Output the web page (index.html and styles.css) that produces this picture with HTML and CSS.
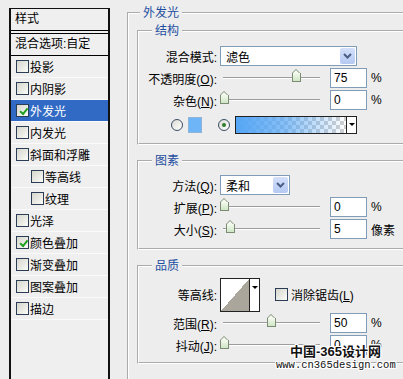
FILE: index.html
```html
<!DOCTYPE html>
<html lang="zh-CN">
<head>
  <meta charset="UTF-8" />
  <meta name="viewport" content="width=device-width, initial-scale=1.0"/>
  <title>图层样式 - 外发光</title>
  <link rel="stylesheet" href="styles.css">
</head>
<body>
  <div class="dialog">
    <div class="style-list">
      <div class="list-head">样式</div>
      <div class="list-blend">混合选项:自定</div>
      <ul class="list-items">
        <li><span class="cb"></span>投影</li>
        <li><span class="cb"></span>内阴影</li>
        <li class="active"><span class="cb on"></span>外发光</li>
        <li><span class="cb"></span>内发光</li>
        <li><span class="cb"></span>斜面和浮雕</li>
        <li class="sub"><span class="cb"></span>等高线</li>
        <li class="sub"><span class="cb"></span>纹理</li>
        <li><span class="cb"></span>光泽</li>
        <li><span class="cb on"></span>颜色叠加</li>
        <li><span class="cb"></span>渐变叠加</li>
        <li><span class="cb"></span>图案叠加</li>
        <li><span class="cb"></span>描边</li>
      </ul>
    </div>

    <fieldset class="group outer">
      <legend>外发光</legend>

      <fieldset class="group inner">
        <legend>结构</legend>
        <div class="row">
          <span class="lbl">混合模式:</span>
          <div class="combo combo-wide"><span>滤色</span><i class="combo-btn"><svg width="9" height="6" viewBox="0 0 9 6"><polyline points="1,1 4.5,4.5 8,1" fill="none" stroke="#4b5f86" stroke-width="2"/></svg></i></div>
        </div>
        <div class="row">
          <span class="lbl">不透明度(<u>O</u>):</span>
          <div class="slider"><i class="thumb" style="left:72px"></i></div>
          <input class="num" type="text" value="75">
          <span class="unit">%</span>
        </div>
        <div class="row">
          <span class="lbl">杂色(<u>N</u>):</span>
          <div class="slider"><i class="thumb" style="left:0px"></i></div>
          <input class="num" type="text" value="0">
          <span class="unit">%</span>
        </div>
        <div class="row color-row">
          <span class="radio"></span>
          <span class="swatch"></span>
          <span class="radio checked"></span>
          <div class="gradient-pick"><span class="gradient"></span><i class="arrow"></i></div>
        </div>
      </fieldset>

      <fieldset class="group inner">
        <legend>图素</legend>
        <div class="row">
          <span class="lbl">方法(<u>Q</u>):</span>
          <div class="combo combo-short"><span>柔和</span><i class="combo-btn"><svg width="9" height="6" viewBox="0 0 9 6"><polyline points="1,1 4.5,4.5 8,1" fill="none" stroke="#4b5f86" stroke-width="2"/></svg></i></div>
        </div>
        <div class="row">
          <span class="lbl">扩展(<u>P</u>):</span>
          <div class="slider"><i class="thumb" style="left:0px"></i></div>
          <input class="num" type="text" value="0">
          <span class="unit">%</span>
        </div>
        <div class="row">
          <span class="lbl">大小(<u>S</u>):</span>
          <div class="slider"><i class="thumb" style="left:6px"></i></div>
          <input class="num" type="text" value="5">
          <span class="unit">像素</span>
        </div>
      </fieldset>

      <fieldset class="group inner">
        <legend>品质</legend>
        <div class="row contour-row">
          <span class="lbl">等高线:</span>
          <div class="contour"><span class="curve"></span><i class="arrow"></i></div>
          <span class="cb antialias"></span>
          <span>消除锯齿(<u>L</u>)</span>
        </div>
        <div class="row">
          <span class="lbl">范围(<u>R</u>):</span>
          <div class="slider"><i class="thumb" style="left:47px"></i></div>
          <input class="num" type="text" value="50">
          <span class="unit">%</span>
        </div>
        <div class="row">
          <span class="lbl">抖动(<u>J</u>):</span>
          <div class="slider"><i class="thumb" style="left:0px"></i></div>
          <input class="num" type="text" value="0">
          <span class="unit">%</span>
        </div>
      </fieldset>
    </fieldset>

    <div class="watermark">
      <div class="wm-title">中国-365设计网</div>
      <div class="wm-url">www.cn365design.com</div>
    </div>
  </div>
</body>
</html>
```

FILE: styles.css
```css
body {
  margin: 0;
  background: #ededed;
  font-family: "Liberation Sans", "Noto Sans CJK SC", sans-serif;
  font-size: 12px;
  color: #000;
  overflow: hidden;
}
.dialog {
  display: flex;
  align-items: flex-start;
  height: 379px;
  position: relative;
  overflow: hidden;
}

/* left style list */
.style-list {
  margin: 8px 0 0 9px;
  width: 97px;
  height: 380px;
  flex-shrink: 0;
  border: 2px solid #111;
  border-top-width: 1px;
  border-bottom: none;
  background: #efefef;
}
.list-head {
  height: 21px;
  line-height: 21px;
  padding-left: 4px;
  border-bottom: 1px solid #000;
}
.list-blend {
  height: 21px;
  line-height: 21px;
  margin-top: 2px;
  padding-left: 4px;
  border-top: 1px solid #000;
  border-bottom: 1px solid #000;
}
.list-items {
  list-style: none;
  margin: 0;
  padding: 0;
}
.list-items li {
  height: 21px;
  display: flex;
  align-items: center;
  padding-left: 5px;
  border-bottom: 1px solid #fafafa;
}
.list-items li.sub {
  padding-left: 20px;
}
.list-items li.active {
  background: #316ac5;
  color: #fff;
}
.list-items .cb {
  margin-right: 1px;
}

/* checkbox */
.cb {
  width: 11px;
  height: 11px;
  border: 1px solid #2b3d55;
  background: linear-gradient(135deg, #d6d6ce, #fbfbf8);
  position: relative;
  flex-shrink: 0;
}
.cb.on::after {
  content: "";
  position: absolute;
  left: 2px;
  top: 1px;
  width: 6px;
  height: 3px;
  border-left: 2px solid #21a121;
  border-bottom: 2px solid #21a121;
  transform: rotate(-50deg) translate(-1px, 2px);
}

/* groups */
.group {
  margin: 0;
  padding: 0;
  border: 2px groove #fff;
  min-width: 0;
}
.group legend {
  color: #1f4fa0;
  line-height: 16px;
  padding: 0 3px;
}
.outer {
  width: 300px;
  flex-shrink: 0;
  margin: 5px 0 0 17px;
  padding: 0 0 0 8px;
  height: 420px;
}
.outer > legend {
  margin-left: 3px;
}
.inner {
  width: 290px;
  margin-top: 8px;
}
.inner legend {
  margin-left: 13px;
}
.outer > .inner:first-of-type {
  margin-top: 2px;
  padding: 6px 0 7px;
}
.inner:nth-of-type(2) {
  padding: 5px 0 8px;
}
.inner:nth-of-type(3) {
  padding: 3px 0 6px;
}

/* rows */
.row {
  display: flex;
  align-items: center;
  height: 22px;
}
.lbl {
  width: 78px;
  margin-right: 3px;
  text-align: right;
  white-space: nowrap;
}

.combo {
  height: 20px;
  box-sizing: border-box;
  border: 1px solid #7f9db9;
  background: #fff;
  display: flex;
  align-items: center;
  justify-content: space-between;
  padding-left: 5px;
}
.combo-wide {
  width: 137px;
}
.combo-short {
  width: 70px;
}
.combo-btn {
  width: 15px;
  height: 16px;
  margin-right: 1px;
  border-radius: 2px;
  background: linear-gradient(#d4e0fb, #b5c9f2);
  display: flex;
  align-items: center;
  justify-content: center;
}

.slider {
  position: relative;
  width: 100px;
  height: 22px;
}
.slider::before {
  content: "";
  position: absolute;
  left: 3px;
  right: 0;
  top: 10px;
  height: 1px;
  background: #9c9c9c;
  border-bottom: 1px solid #fff;
}
.thumb {
  position: absolute;
  top: 6px;
  width: 7px;
  height: 8px;
  margin-left: 0;
  border: 1px solid #7c8c74;
  border-top: none;
  background: linear-gradient(#f4faef, #cfe6c4);
}
.thumb::before {
  content: "";
  position: absolute;
  left: -1px;
  top: -4px;
  width: 0;
  height: 0;
  border-left: 4.5px solid transparent;
  border-right: 4.5px solid transparent;
  border-bottom: 4px solid #7c8c74;
}
.thumb::after {
  content: "";
  position: absolute;
  left: 0;
  top: -3px;
  width: 0;
  height: 0;
  border-left: 3.5px solid transparent;
  border-right: 3.5px solid transparent;
  border-bottom: 3px solid #f4faef;
}

.num {
  margin: 0 0 0 10px;
  width: 37px;
  height: 20px;
  box-sizing: border-box;
  border: 1px solid #7f9db9;
  padding: 0 3px;
  font: inherit;
  font-size: 12px;
  background: #fff;
}
.unit {
  margin-left: 4px;
}

/* color row */
.color-row {
  margin-top: 3px;
}
.radio {
  width: 10px;
  height: 10px;
  border: 1px solid #3a4d66;
  border-radius: 50%;
  background: linear-gradient(135deg, #dcdcd4, #fff);
  position: relative;
  flex-shrink: 0;
}
.color-row .radio:first-child {
  margin-left: 32px;
}
.radio.checked {
  margin-left: 16px;
}
.radio.checked::after {
  content: "";
  position: absolute;
  left: 3px;
  top: 3px;
  width: 4px;
  height: 4px;
  border-radius: 50%;
  background: #2f7a2f;
}
.swatch {
  width: 14px;
  height: 16px;
  margin-left: 5px;
  background: #6db5f6;
  border: 1px solid #8fb4d8;
  box-sizing: border-box;
}
.gradient-pick {
  margin-left: 5px;
  width: 122px;
  height: 18px;
  box-sizing: border-box;
  border: 1px solid #222;
  display: flex;
}
.gradient {
  flex: 1;
  background:
    linear-gradient(to right, #55a6f5 0%, rgba(85, 166, 245, 0.7) 45%, rgba(85, 166, 245, 0) 100%),
    repeating-conic-gradient(#cfcfcf 0 25%, #fff 0 50%) 0 0 / 8px 8px;
}
.arrow {
  width: 9px;
  border-left: 1px solid #222;
  background: #fff;
  position: relative;
}
.arrow::after {
  content: "";
  position: absolute;
  left: 2px;
  top: 6px;
  border-left: 3px solid transparent;
  border-right: 3px solid transparent;
  border-top: 3px solid #000;
}

/* contour */
.contour-row {
  height: 35px;
}
.contour {
  width: 40px;
  height: 34px;
  box-sizing: border-box;
  border: 1px solid #222;
  display: flex;
}
.curve {
  flex: 1;
  background: linear-gradient(to bottom right, #fff 50%, #aaa69b 50%);
}
.contour .arrow::after {
  top: 7px;
}
.antialias {
  margin-left: 15px;
  margin-right: 3px;
}

/* watermark over the corner */
.watermark {
  position: absolute;
  left: 272px;
  top: 344px;
  color: #111;
  text-shadow: 1px 0 0 #fff, -1px 0 0 #fff, 0 1px 0 #fff, 0 -1px 0 #fff,
    1px 1px 0 #fff, -1px -1px 0 #fff, 1px -1px 0 #fff, -1px 1px 0 #fff;
}
.wm-title {
  margin-left: 18px;
  font-size: 13px;
  line-height: 15px;
  font-weight: bold;
}
.wm-url {
  font-family: "Liberation Mono", monospace;
  font-size: 10.5px;
  line-height: 13px;
  margin-left: 4px;
}
```
